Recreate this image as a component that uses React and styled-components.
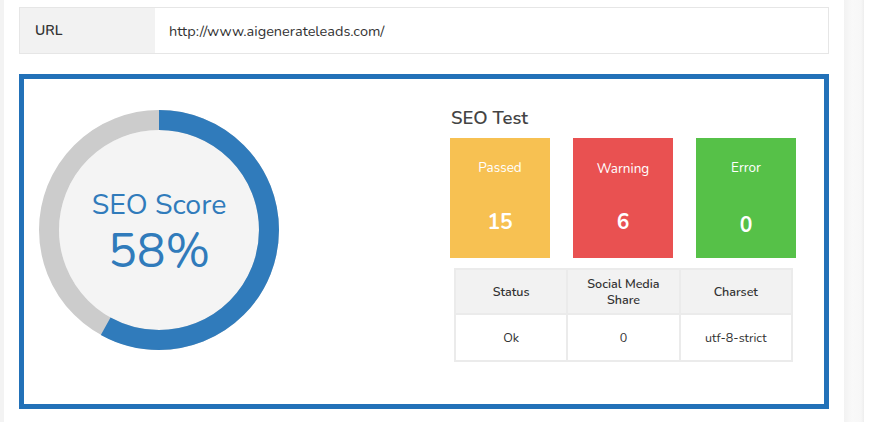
import React from "react";
import styled, { createGlobalStyle } from "styled-components";

const Global = createGlobalStyle`
  html, body { margin: 0; padding: 0; background: #fff; }
  body { font-family: "Nunito", Lato, "Open Sans", sans-serif; color: #333; }
  * { box-sizing: border-box; }
`;

const Page = styled.div`
  display: flex;
  width: 880px;
  height: 422px;
  overflow: hidden;
`;

const LeftStrip = styled.div`
  width: 4px;
  background: #f3f3f3;
  flex: none;
`;

const Main = styled.div`
  width: 840px;
  flex: none;
  padding: 7px 15px 0 15px;
  display: flex;
  flex-direction: column;
  gap: 20px;
`;

const RightShadow = styled.div`
  width: 20px;
  flex: none;
  background: linear-gradient(to right, #f2f2f2, #f9f9f9 40%, #f7f7f7 85%, #eeeeee);
`;

const UrlTable = styled.div`
  display: flex;
  height: 47px;
  border: 1px solid #e6e6e6;
`;

const UrlLabel = styled.div`
  width: 135px;
  background: #f2f2f2;
  display: flex;
  align-items: center;
  padding-left: 15px;
  font-size: 14px;
  font-weight: 600;
  color: #333;
`;

const UrlValue = styled.div`
  flex: 1;
  display: flex;
  align-items: center;
  padding-left: 14px;
  font-size: 14.5px;
  color: #333;
`;

const ScoreBox = styled.div`
  height: 335px;
  border: 5px solid #2271b8;
  display: flex;
`;

const GaugeCol = styled.div`
  padding: 31px 0 0 15px;
  width: 426px;
`;

const Gauge = styled.div`
  display: grid;
  width: 240px;
  height: 240px;
  & > * { grid-area: 1 / 1; }
`;

const GaugeText = styled.div`
  display: flex;
  flex-direction: column;
  align-items: center;
  justify-content: center;
  color: #307bbb;
  padding-top: 6px;
`;

const GaugeLabel = styled.div`
  font-size: 28.5px;
  line-height: 36px;
`;

const GaugeValue = styled.div`
  font-size: 48px;
  line-height: 56px;
`;

const TestCol = styled.div`
  padding-top: 27px;
  display: flex;
  flex-direction: column;
`;

const Heading = styled.div`
  font-size: 18.5px;
  font-weight: 600;
  color: #444;
  line-height: 24px;
  margin-left: 1px;
  margin-bottom: 8px;
`;

const Cards = styled.div`
  display: flex;
  gap: 23px;
`;

const Card = styled.div`
  width: 100px;
  height: 120px;
  background: ${(p) => p.$bg};
  color: #fff;
  display: flex;
  flex-direction: column;
  align-items: center;
  padding-top: ${(p) => p.$top}px;
`;

const CardTitle = styled.div`
  font-size: 13.5px;
  line-height: 18px;
`;

const CardNum = styled.div`
  font-size: 21px;
  font-weight: 700;
  line-height: 24px;
  margin-top: ${(p) => p.$gap}px;
`;

const Table = styled.table`
  margin: 10px 0 0 4px;
  border-collapse: collapse;
  width: 339px;
  font-size: 12.5px;
  text-align: center;
`;

const Th = styled.th`
  width: 113px;
  height: 45px;
  background: #f2f2f2;
  border: 2px solid #ebebeb;
  font-weight: 600;
  color: #333;
  line-height: 16px;
  padding: 0 8px;
`;

const Td = styled.td`
  height: 47px;
  border: 2px solid #ebebeb;
  color: #333;
`;

const R = 110;
const C = 2 * Math.PI * R;

export default function App() {
  const pct = 58;
  return (
    <>
      <Global />
      <Page>
        <LeftStrip />
        <Main>
          <UrlTable>
            <UrlLabel>URL</UrlLabel>
            <UrlValue>http://www.aigenerateleads.com/</UrlValue>
          </UrlTable>
          <ScoreBox>
            <GaugeCol>
              <Gauge>
                <svg width="240" height="240" viewBox="0 0 240 240">
                  <circle cx="120" cy="120" r="100" fill="#f4f4f4" />
                  <circle cx="120" cy="120" r={R} fill="none" stroke="#cccccc" strokeWidth="20" />
                  <circle
                    cx="120"
                    cy="120"
                    r={R}
                    fill="none"
                    stroke="#307bbb"
                    strokeWidth="20"
                    strokeDasharray={`${(C * pct) / 100} ${C}`}
                    transform="rotate(-90 120 120)"
                  />
                </svg>
                <GaugeText>
                  <GaugeLabel>SEO Score</GaugeLabel>
                  <GaugeValue>{pct}%</GaugeValue>
                </GaugeText>
              </Gauge>
            </GaugeCol>
            <TestCol>
              <Heading>SEO Test</Heading>
              <Cards>
                <Card $bg="#f7c152" $top={21}>
                  <CardTitle>Passed</CardTitle>
                  <CardNum $gap={33}>15</CardNum>
                </Card>
                <Card $bg="#e95151" $top={22}>
                  <CardTitle>Warning</CardTitle>
                  <CardNum $gap={32}>6</CardNum>
                </Card>
                <Card $bg="#56c148" $top={21}>
                  <CardTitle>Error</CardTitle>
                  <CardNum $gap={36}>0</CardNum>
                </Card>
              </Cards>
              <Table>
                <thead>
                  <tr>
                    <Th>Status</Th>
                    <Th>Social Media Share</Th>
                    <Th>Charset</Th>
                  </tr>
                </thead>
                <tbody>
                  <tr>
                    <Td>Ok</Td>
                    <Td>0</Td>
                    <Td>utf-8-strict</Td>
                  </tr>
                </tbody>
              </Table>
            </TestCol>
          </ScoreBox>
        </Main>
        <RightShadow />
      </Page>
    </>
  );
}
